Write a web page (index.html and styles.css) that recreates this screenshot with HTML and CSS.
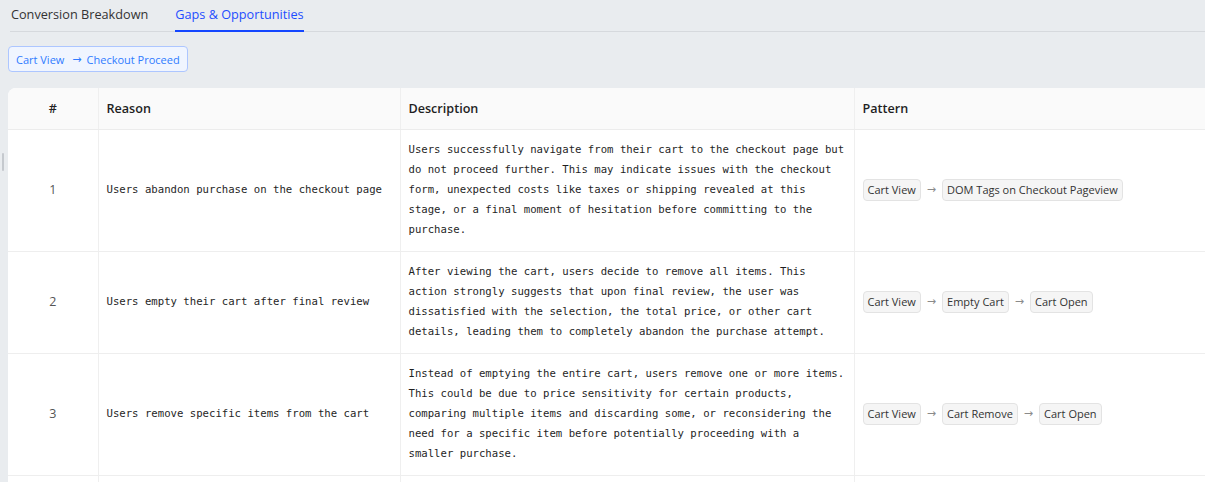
FILE: index.html
```html
<!DOCTYPE html>
<html>
<head>
<meta charset="utf-8">
<link rel="stylesheet" href="styles.css">
</head>
<body>
<div class="handle"></div>
<div class="page">
  <div class="tabs">
    <div class="tab">Conversion Breakdown</div>
    <div class="tab active">Gaps &amp; Opportunities</div>
  </div>
  <div class="chip-row">
    <span class="chip">Cart View <span class="chip-arrow">→</span> Checkout Proceed</span>
  </div>
  <div class="table-wrap">
    <table class="gaps">
      <colgroup>
        <col class="c-num"><col class="c-reason"><col class="c-desc"><col class="c-pattern">
      </colgroup>
      <thead>
        <tr><th class="num">#</th><th>Reason</th><th>Description</th><th>Pattern</th></tr>
      </thead>
      <tbody>
        <tr>
          <td class="num">1</td>
          <td class="mono">Users abandon purchase on the checkout page</td>
          <td class="mono desc">Users successfully navigate from their cart to the checkout page but do not proceed further. This may indicate issues with the checkout form, unexpected costs like taxes or shipping revealed at this stage, or a final moment of hesitation before committing to the purchase.</td>
          <td class="pattern"><div class="flow"><span class="tag">Cart View</span><span class="arr">→</span><span class="tag">DOM Tags on Checkout Pageview</span></div></td>
        </tr>
        <tr>
          <td class="num">2</td>
          <td class="mono">Users empty their cart after final review</td>
          <td class="mono desc">After viewing the cart, users decide to remove all items. This action strongly suggests that upon final review, the user was dissatisfied with the selection, the total price, or other cart details, leading them to completely abandon the purchase attempt.</td>
          <td class="pattern"><div class="flow"><span class="tag">Cart View</span><span class="arr">→</span><span class="tag">Empty Cart</span><span class="arr">→</span><span class="tag">Cart Open</span></div></td>
        </tr>
        <tr>
          <td class="num">3</td>
          <td class="mono">Users remove specific items from the cart</td>
          <td class="mono desc">Instead of emptying the entire cart, users remove one or more items. This could be due to price sensitivity for certain products, comparing multiple items and discarding some, or reconsidering the need for a specific item before potentially proceeding with a smaller purchase.</td>
          <td class="pattern"><div class="flow"><span class="tag">Cart View</span><span class="arr">→</span><span class="tag">Cart Remove</span><span class="arr">→</span><span class="tag">Cart Open</span></div></td>
        </tr>
        <tr>
          <td class="num">4</td>
          <td class="mono">Users leave after viewing the cart</td>
          <td class="mono desc">Users open the cart and review its contents without taking further action.</td>
          <td class="pattern"><div class="flow"><span class="tag">Cart View</span></div></td>
        </tr>
      </tbody>
    </table>
  </div>
</div>
</body>
</html>
```

FILE: styles.css
```css
html, body {
  margin: 0;
  padding: 0;
  background: #e9ecef;
  overflow: hidden;
  height: 482px;
}
body {
  font-family: "Open Sans", "Noto Sans", Arial, sans-serif;
  color: #222;
  position: relative;
}
.handle {
  position: absolute;
  left: 2px;
  top: 153px;
  width: 2px;
  height: 18px;
  background: #c5c9ce;
  border-radius: 1px;
}
.page {
  padding: 0 0 0 8px;
}
.tabs {
  display: flex;
  gap: 27px;
  height: 31px;
  margin-left: 2px;
  border-bottom: 1px solid #d6d9dd;
  box-sizing: content-box;
}
.tab {
  font-size: 12.7px;
  line-height: 20px;
  padding: 4px 0 0 1px;
  color: #333;
  position: relative;
}
.tab.active {
  color: #1e4dff;
  padding-left: 0;
}
.tab.active::after {
  content: "";
  position: absolute;
  left: 0;
  right: 0;
  bottom: -1px;
  height: 2px;
  background: #1446ff;
}
.chip-row {
  display: flex;
  padding-top: 14px;
  height: 26px;
}
.chip {
  display: inline-flex;
  align-items: center;
  height: 24px;
  padding: 0 7px;
  border: 1px solid #adc6ff;
  border-radius: 4px;
  background: #f0f5ff;
  color: #2f7bff;
  font-size: 11px;
  white-space: nowrap;
}
.chip-arrow {
  margin: 0 5px 0 8px;
  color: #2f7bff;
  font-family: "DejaVu Sans", sans-serif;
  font-size: 11px;
}
.table-wrap {
  margin-top: 16px;
  width: 1260px;
  background: #fff;
  border-radius: 8px 8px 0 0;
  overflow: hidden;
}
.gaps {
  border-collapse: collapse;
  table-layout: fixed;
  width: 1260px;
}
.c-num { width: 90px; }
.c-reason { width: 302px; }
.c-desc { width: 454px; }
.c-pattern { width: 414px; }
.gaps th {
  background: #fafafa;
  font-size: 12.6px;
  font-weight: 600;
  text-align: left;
  color: #1f1f1f;
  height: 41px;
  padding: 0 8px;
  border-bottom: 1px solid #ececec;
  border-right: 1px solid #efefef;
  box-sizing: border-box;
}
.gaps td {
  padding: 10px 8px 11px;
  border-bottom: 1px solid #eeeeee;
  border-right: 1px solid #efefef;
  vertical-align: middle;
  font-size: 12.5px;
}
.gaps th.num, .gaps td.num {
  text-align: center;
  color: #555;
}
.gaps th.num { color: #222; }
.gaps td.mono {
  font-family: "DejaVu Sans Mono", "Liberation Mono", monospace;
  font-size: 10.65px;
  line-height: 20px;
  color: #262626;
}
.gaps td.desc {
  color: #1f1f1f;
  padding-right: 6px;
}
.flow {
  display: flex;
  align-items: center;
}
.tag {
  display: inline-block;
  height: 20px;
  line-height: 20px;
  padding: 0 4px;
  background: #f5f5f5;
  border: 1px solid #e3e3e3;
  border-radius: 4px;
  font-size: 11px;
  color: #333;
  white-space: nowrap;
}
.arr {
  color: #8a8a8a;
  font-family: "DejaVu Sans", sans-serif;
  font-size: 11px;
  margin: 0 6px;
}
```
